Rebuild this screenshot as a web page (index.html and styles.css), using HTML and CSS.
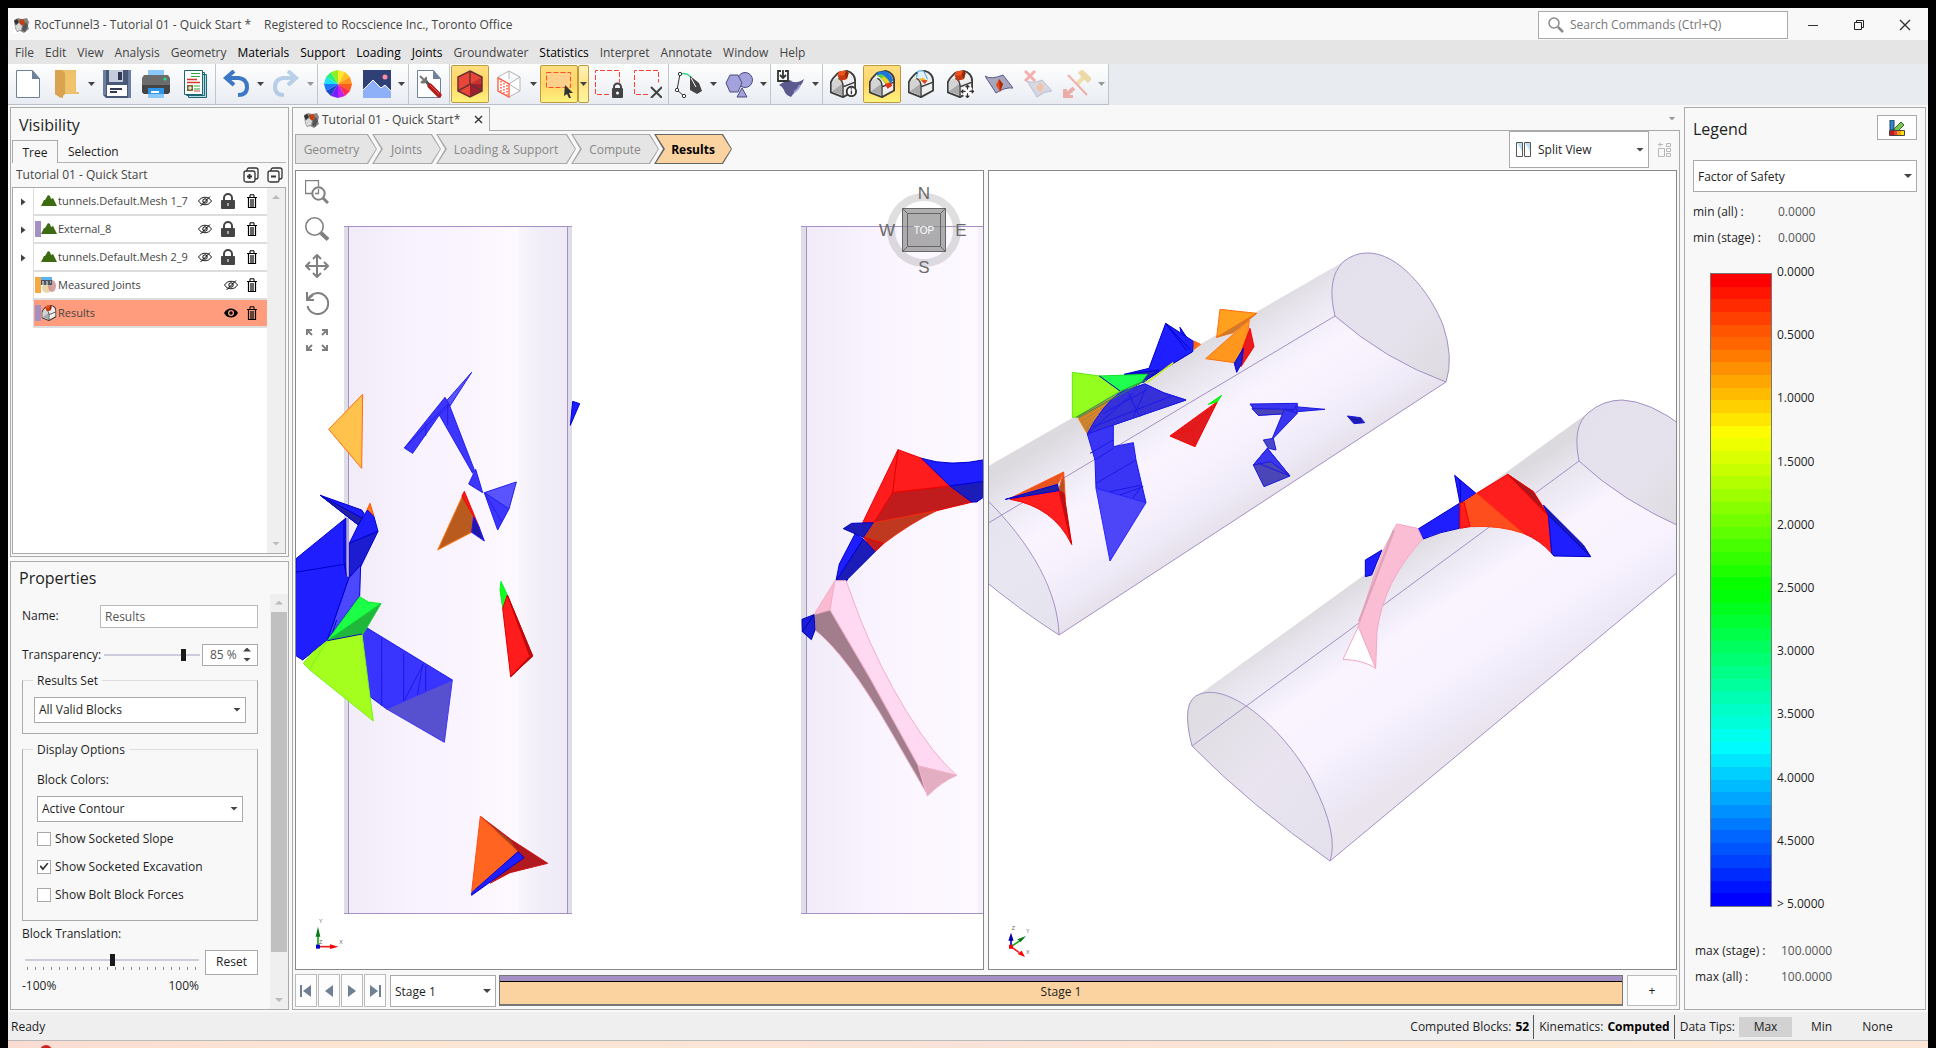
FILE: index.html
```html
<!DOCTYPE html>
<html lang="en">
<head>
<meta charset="utf-8">
<title>RocTunnel3 - Tutorial 01 - Quick Start</title>
<link rel="stylesheet" href="styles.css">
</head>
<body>
<svg class="defs" aria-hidden="true">
  <symbol id="rock" viewBox="0 0 16 16"><path d="M1 3 5 1l4 1 5-1 2 4-1 4 1 3-5 4-4-2-3 1-2-4z" fill="#888"/><path d="M2 9l4-3 3 3-1 4-4 1z" fill="#d8d8d8"/><path d="M6 3l4-1 2 3-1 4-4-2z" fill="#c2410f"/><path d="M10 9l3-4 2 4-3 6-3-2z" fill="#555"/><path d="M1 4l3-2 2 3-3 3z" fill="#333"/></symbol>
  <symbol id="arch" viewBox="0 0 28 30"><path d="M1 24V13C3 8 7 5 9 3l9-2c6 1 9 6 9 11v10l-13 7z" fill="#eee" stroke="#3c3c3c" stroke-width="2" stroke-linejoin="round"/><path d="M2 23V14c1-3 4-5 6-5 3 0 5 3 5 8v10z" fill="#d4d4d4"/><path d="M2 23l11-8v12z" fill="#aaa"/><path d="M14 29V18l13-5M9 9q5 2 5 9" fill="none" stroke="#3c3c3c" stroke-width="1.500"/></symbol>
  <symbol id="redrock" viewBox="0 0 14 12"><path d="M2 1l8-1 3 3-2 7-7 2-4-6z" fill="#f0521a"/><path d="M10 0l3 3-2 7-3-4z" fill="#8d2a0c"/><path d="M0 6l8 0 3 4-7 2z" fill="#c43a10"/></symbol>
  <symbol id="mountain" viewBox="0 0 16 12"><path d="M0 11 3 5l1 0 3-5 2 1 1 3 2-1 4 8z" fill="#3d6b12"/></symbol>
  <symbol id="eye-off" viewBox="0 0 14 12"><path d="M.5 6c3-5 10-5 13 0-3 5-10 5-13 0z" fill="#fff" stroke="#000" stroke-width=".9"/><circle cx="7" cy="6" r="2.200" fill="none" stroke="#000"/><path d="M2.500 11 12 1.500" stroke="#000"/></symbol>
  <symbol id="eye" viewBox="0 0 14 12"><path d="M0 6c3-6 11-6 14 0-3 6-11 6-14 0z"/><circle cx="7" cy="6" r="3" fill="#ff9c7e"/><circle cx="7" cy="6" r="1.700"/></symbol>
  <symbol id="lock" viewBox="0 0 14 16"><path d="M3 8V5a4 4 0 0 1 8 0v3" fill="none" stroke="#444" stroke-width="2"/><rect y="7" width="14" height="9" rx="1" fill="#444"/><path d="M7 10v3" stroke="#aaa" stroke-width="2"/></symbol>
  <symbol id="trash" viewBox="0 0 10 14"><path d="M0 3.500h10M3 3V.800h4V3" fill="none" stroke="#000"/><path d="M1.500 4v9.500h7V4M4 5v8M6 5v8" fill="none" stroke="#000" stroke-width="1.200"/></symbol>
</svg>

<div class="app">
  <header class="titlebar">
    <svg class="logo"><use href="#rock"/></svg>
    <h1>RocTunnel3 - Tutorial 01 - Quick Start *</h1>
    <span class="registered">Registered to Rocscience Inc., Toronto Office</span>
    <div class="search">
      <svg width="16" height="16" viewBox="0 0 16 16" fill="none" stroke="#8a8a8a"><circle cx="6" cy="6" r="5" stroke-width="1.500"/><path d="m10 10 5 5" stroke-width="2.500"/></svg>
      <input type="text" aria-label="Search commands" placeholder="Search Commands (Ctrl+Q)">
    </div>
    <div class="window-buttons">
      <button aria-label="Minimize"><svg width="12" height="12"><path d="M1 6.500h10" stroke="#333"/></svg></button>
      <button aria-label="Restore"><svg width="12" height="12" fill="none" stroke="#222"><path d="M1.500 3.500h7v7h-7zM3.500 3.500v-2h7v7h-2"/></svg></button>
      <button aria-label="Close"><svg width="12" height="12"><path d="m1 1 10 10M11 1 1 11" stroke="#333" stroke-width="1.400"/></svg></button>
    </div>
  </header>

  <nav class="menu">
    <button>File</button><button>Edit</button><button>View</button><button>Analysis</button><button>Geometry</button><button class="on">Materials</button><button class="on">Support</button><button class="on">Loading</button><button class="on">Joints</button><button>Groundwater</button><button class="on">Statistics</button><button>Interpret</button><button>Annotate</button><button>Window</button><button>Help</button>
  </nav>

  <div class="toolbar">
    <div class="group">
      <button class="tool" aria-label="New"><svg viewBox="0 0 28 28"><path d="M2.500.500h16l7 8v19h-23z" fill="#fff" stroke="#71809b"/><path d="M18 0v9h8z" fill="#71809b"/></svg></button>
      <button class="tool" aria-label="Open"><svg viewBox="0 0 28 28"><path d="M2 0h21v22h3v2H8v4l-6-4z" fill="#ecc068"/><path d="M2 0l8 6v22l-8-4z" fill="#cf9744"/><path d="M2 0h7l3 3v21l-4 4-6-4z" fill="#d9a350"/><path d="M13 3h9v20h-9z" fill="#f0c46c"/></svg></button><button class="drop" aria-label="Open recent"></button>
      <button class="tool" aria-label="Save"><svg viewBox="0 0 28 28"><path d="M0 0h28v28H3l-3-3z" fill="#4a5878"/><path d="M25 0h3v28h-3zM0 0h3v25H0z" fill="#6e80a2"/><path d="M6 0h14v12H6z" fill="#c5ccdc"/><path d="M15 2h4v8h-4z" fill="#313a52"/><path d="M4 15h20v11H4z" fill="#fff"/><path d="M7 19h12M7 22h7" stroke="#313a52" stroke-width="2"/></svg></button>
      <button class="tool" aria-label="Print"><svg viewBox="0 0 28 28"><path d="M6 0h16v8H6z" fill="#8cc8fa"/><path d="M2 5h24l2 3v14l-2 2H2l-2-2V8z" fill="#6c6c6c"/><path d="M0 15h28v7l-2 2H2l-2-2z" fill="#454545"/><circle cx="23" cy="9" r="1.600" fill="#1ee07c"/><path d="M6 18h16v10H6z" fill="#2e96e8"/><path d="M6 24h16v4H6z" fill="#8cc8fa"/><path d="M9 22h8" stroke="#fff" stroke-width="2"/></svg></button>
      <button class="tool" aria-label="Report"><svg viewBox="0 0 28 28"><path d="M8.500 4.500h17v23h-18v-2M6.500 2.500h17v23h-18v-2" fill="#b6dce4" stroke="#1e6674"/><path d="M3.500.500h18v24h-18z" fill="#fff" stroke="#1e6674"/><path d="M10 3.500h9M10 6.500h9M13 16h6M13 19h6" stroke="#2eaa40"/><path d="M6 9.500h10M6 12.500h13" stroke="#d8342a" stroke-width="1.300"/><path d="M6 15h6v6H6z" fill="#7a6a28"/><path d="M9 16v4M7 18h4" stroke="#fff"/><path d="M13 21h6" stroke="#c44"/></svg></button>
    </div>
    <div class="group">
      <button class="tool" aria-label="Undo"><svg viewBox="0 0 28 28"><path d="M12 1 4 8l8 7M5 8h12q8 1 8 9t-9 8" fill="none" stroke="#3d78c4" stroke-width="4"/></svg></button><button class="drop" aria-label="Undo list"></button>
      <button class="tool" aria-label="Redo"><svg viewBox="0 0 28 28" opacity=".5"><path d="m16 1 8 7-8 7M23 8H11q-8 1-8 9t9 8" fill="none" stroke="#7ba9d8" stroke-width="4"/></svg></button><button class="drop dim" aria-label="Redo list"></button>
    </div>
    <div class="group">
      <button class="tool" aria-label="Colors"><svg viewBox="0 0 28 28"><g transform="translate(14 14)"><path d="M0 0V-14L7-12z" fill="#ffe72c"/><path d="M0 0 7-12 12-7z" fill="#ffc21e"/><path d="M0 0 12-7 14 0z" fill="#ff941e"/><path d="M0 0H14L12 7z" fill="#ff5c1c"/><path d="M0 0 12 7 7 12z" fill="#ff2c50"/><path d="M0 0 7 12 0 14z" fill="#c31ef0"/><path d="M0 0V14L-7 12z" fill="#7a1eff"/><path d="M0 0-7 12-12 7z" fill="#1e46c8"/><path d="M0 0-12 7-14 0z" fill="#1e78ff"/><path d="M0 0H-14L-12-7z" fill="#1ee0f0"/><path d="M0 0-12-7-7-12z" fill="#28f07c"/><path d="M0 0-7-12 0-14z" fill="#8cf01e"/></g></svg></button>
      <button class="tool" aria-label="Image"><svg viewBox="0 0 28 28"><path d="M0 0h28v28H0z" fill="#2e4076"/><path d="M0 20 10 10l8 8 4-3 6 6v7H0z" fill="#8eb0f8"/><path d="m0 20 10-10 8 8 4-3 6 6" fill="none" stroke="#fff"/><circle cx="22" cy="7" r="2.500" fill="#ff8ca0"/></svg></button><button class="drop" aria-label="Image options"></button>
    </div>
    <div class="group">
      <button class="tool" aria-label="Project settings"><svg viewBox="0 0 28 28"><path d="M2.500.500h16l7 8v19h-23z" fill="#fff" stroke="#71809b"/><path d="M18 0v9h8z" fill="#71809b"/><path d="m9 9 7 8" stroke="#555" stroke-width="3"/><path d="M5 6l4 4-3 3M6 12q6 2 5-5" fill="none" stroke="#777" stroke-width="2"/><path d="m15 16 9 9" stroke="#b01c1c" stroke-width="5" stroke-linecap="round"/><path d="m15 15 9 9" stroke="#f05050"/></svg></button>
    </div>
    <div class="group">
      <button class="tool active" aria-label="Solid"><svg viewBox="0 0 28 28"><path d="M14 1l12 6v14l-12 6-12-6V7z" fill="#e84638"/><path d="M14 14h12v7l-12 6z" fill="#a02030"/><path d="M14 14 26 7v7z" fill="#c63430"/><path d="M14 1l12 6v14l-12 6-12-6V7zM14 1v13M2 21l12-7 12 7" fill="none" stroke="#6a3030" stroke-width="1.500"/></svg></button>
      <button class="tool" aria-label="Faces"><svg viewBox="0 0 28 28"><path d="M14 1l11 6v14l-11 6M14 1 3 7l11 7 11-7M14 14l11 7M14 1v8" fill="#fff" stroke="#b4b4b4"/><path d="m3 8 11 6v13L3 21z" fill="#fff" stroke="#ff5a3c" stroke-width="1.300"/><path d="M6 11v11M9 13v11M12 15v10" stroke="#ff5a3c" stroke-width="1.500" stroke-dasharray="1.500 1.500"/></svg></button><button class="drop" aria-label="Face options"></button>
      <button class="tool active" aria-label="Select"><svg viewBox="0 0 28 28"><path d="M1.500 2.500h24v15h-24z" fill="#ffd08c" stroke="#ff5020" stroke-dasharray="5 2"/><path d="M20 15l8 8-4 0 2 5-2 0-2-4-3 2z" fill="#333"/></svg></button><button class="drop active" aria-label="Select options"></button>
      <button class="tool" aria-label="Lock selection"><svg viewBox="0 0 28 28"><path d="M14 24.500H.500V.500h24v12" fill="none" stroke="#ff4030" stroke-dasharray="5 2"/><path d="M19 18v-1a3.500 3.500 0 0 1 7 0v1" fill="none" stroke="#444" stroke-width="2"/><rect x="17" y="18" width="11" height="10" rx="1" fill="#444"/><circle cx="22.500" cy="23" r="1.500" fill="#fff"/></svg></button>
      <button class="tool" aria-label="Clear selection"><svg viewBox="0 0 28 28"><path d="M14 24.500H.500V.500h24v12" fill="none" stroke="#ff4030" stroke-dasharray="5 2"/><path d="m17 17 11 11M28 17 17 28" stroke="#444" stroke-width="2"/></svg></button>
    </div>
    <div class="group">
      <button class="tool" aria-label="Pen"><svg viewBox="0 0 28 28" fill="none"><path d="M5 4 2 20l7 6" stroke="#333"/><path d="M5 4q6-2 11 3" stroke="#2ed880" stroke-width="1.500"/><g fill="#fff" stroke="#333"><circle cx="5" cy="4" r="1.700"/><circle cx="2" cy="20" r="1.700"/><circle cx="9" cy="26" r="1.700"/></g><path d="m15 6 9 7 3 8-5 3-7-4z" fill="#444"/><path d="m16 8 5 9" stroke="#fff"/></svg></button><button class="drop" aria-label="Pen options"></button>
      <button class="tool" aria-label="Shapes"><svg viewBox="0 0 28 28" fill="#a4a2dc" stroke="#4c4c80"><circle cx="20" cy="10" r="7.500"/><path d="M5 5h8l4 8-4 9H5l-4-9z"/><path d="m17 18 5 9H12z"/></svg></button><button class="drop" aria-label="Shape options"></button>
    </div>
    <div class="group">
      <button class="tool" aria-label="Import surface"><svg viewBox="0 0 28 28"><path d="M2 15q5-4 11-5 5 5 14-1-1 4-4 7t-9 11q-6-2-7-7-2-4-5-5z" fill="#5b5a8e"/><path d="M17 22q4-2 6-7" stroke="#9c9bd0" stroke-width="2" fill="none"/><path d="M4 1H1v10h10V1H8M6 0v7M3 5l3 3 3-3" fill="none" stroke="#333" stroke-width="1.800"/></svg></button><button class="drop" aria-label="Import options"></button>
    </div>
    <div class="group">
      <button class="tool" aria-label="Block info"><svg viewBox="0 0 28 30"><use href="#arch" width="28" height="30"/><use href="#redrock" x="8" width="13" height="12"/><circle cx="23" cy="23" r="5" fill="#fff" stroke="#333" stroke-width="2"/><path d="M23 22v4M23 19.500v1.500" stroke="#333" stroke-width="1.500"/></svg></button>
      <button class="tool active" aria-label="Block contours"><svg viewBox="0 0 28 30"><use href="#arch" width="28" height="30"/><path d="M10 2l8-1q6 3 8 10l-6 7q-4-9-12-13z" fill="#1e74e0"/><path d="M9 6q3-2 6-1 6 4 8 10l-3 4q-4-8-11-13z" fill="#5ed040"/><path d="M13 9q5 3 8 10l3-3q-3-6-8-9z" fill="#f8d01e"/><path d="m17 15 6-2 2 4-5 3z" fill="#e0341e"/></svg></button>
      <button class="tool" aria-label="Block outlines"><svg viewBox="0 0 28 30"><use href="#arch" width="28" height="30"/><path d="m9 8 2-7h6l4 9" fill="#e0f0fa" stroke="#3c9ac0"/><path d="m12 9 9 2-3 4z" fill="#d8401e"/><path d="m11 11 5-3 3 3z" fill="#f0b81e"/></svg></button>
      <button class="tool" aria-label="Move block"><svg viewBox="0 0 28 30"><use href="#arch" width="28" height="30"/><use href="#redrock" x="8" width="13" height="12"/><circle cx="22" cy="23" r="6" fill="#fff"/><path d="M22 16v5M22 25v5M15 23h5M24 23h5M20 18.500l2-2 2 2M20 27.500l2 2 2-2M17.500 21l-2 2 2 2M26.500 21l2 2-2 2" stroke="#333" stroke-width="1.300" fill="none"/></svg></button>
      <button class="tool" aria-label="Surface block"><svg viewBox="0 0 28 28"><path d="M0 6q6 4 18-1l10 13q-8-1-17 5z" fill="#a5a8bc" stroke="#5b5a8e"/><path d="m14 9 4 5-3 8-4-7z" fill="#e8481c"/><path d="m14 9 4 5-3 8z" fill="#a82c0c"/></svg></button>
      <button class="tool faded" aria-label="Remove surface block"><svg viewBox="0 0 28 28"><path d="M3 11q6 3 15-1l10 11q-8 0-15 6z" fill="#a5a8bc" stroke="#5b5a8e"/><path d="m16 12 4 4-3 7-5-5z" fill="#f06a1c"/><path d="m1 1 10 10M11 1 1 11" stroke="#e82c1c" stroke-width="3"/></svg></button>
      <button class="tool faded" aria-label="Bolt forces"><svg viewBox="0 0 28 28" fill="none"><path d="m14 14 9-9" stroke="#e0b01c" stroke-width="4"/><path d="m17 1 10 10" stroke="#d8a010" stroke-width="6"/><path d="M11 18 2 26M2 19v8h8" stroke="#e83020" stroke-width="4"/><path d="m5 5 19 20" stroke="#e83020" stroke-width="2"/></svg></button><button class="drop dim" aria-label="Bolt options"></button>
    </div>
  </div>

  <main class="workspace">
    <aside class="sidebar">
      <section class="panel visibility">
        <h2>Visibility</h2>
        <div class="tabs"><button class="tab current">Tree</button><button class="tab">Selection</button></div>
        <div class="tree-head"><span>Tutorial 01 - Quick Start</span>
          <button aria-label="Expand all"><svg width="16" height="16" fill="#f8f8f8" stroke="#333" stroke-width="1.300"><rect x="4" y="1" width="11" height="11" rx="2"/><rect x="1" y="4" width="11" height="11" rx="2"/><path d="M4 9.500h5M6.500 7v5" stroke-width="2"/></svg></button>
          <button aria-label="Collapse all"><svg width="16" height="16" fill="#f8f8f8" stroke="#333" stroke-width="1.300"><rect x="4" y="1" width="11" height="11" rx="2"/><rect x="1" y="4" width="11" height="11" rx="2"/><path d="M4 9.500h5" stroke-width="2"/></svg></button>
        </div>
        <div class="tree-box">
          <ul class="tree">
            <li><button class="twist" aria-label="Expand"></button><div class="node"><i class="chip"></i><svg class="kind"><use href="#mountain"/></svg><span>tunnels.Default.Mesh 1_7</span><button class="act" aria-label="Show"><svg class="i-eye"><use href="#eye-off"/></svg></button><button class="act locked" aria-label="Locked"><svg class="i-lock"><use href="#lock"/></svg></button><button class="act" aria-label="Delete"><svg class="i-trash"><use href="#trash"/></svg></button></div></li>
            <li><button class="twist" aria-label="Expand"></button><div class="node"><i class="chip violet"></i><svg class="kind"><use href="#mountain"/></svg><span>External_8</span><button class="act" aria-label="Show"><svg class="i-eye"><use href="#eye-off"/></svg></button><button class="act locked" aria-label="Locked"><svg class="i-lock"><use href="#lock"/></svg></button><button class="act" aria-label="Delete"><svg class="i-trash"><use href="#trash"/></svg></button></div></li>
            <li><button class="twist" aria-label="Expand"></button><div class="node"><i class="chip"></i><svg class="kind"><use href="#mountain"/></svg><span>tunnels.Default.Mesh 2_9</span><button class="act" aria-label="Show"><svg class="i-eye"><use href="#eye-off"/></svg></button><button class="act locked" aria-label="Locked"><svg class="i-lock"><use href="#lock"/></svg></button><button class="act" aria-label="Delete"><svg class="i-trash"><use href="#trash"/></svg></button></div></li>
            <li><div class="node"><i class="chip amber"></i><svg class="kind tall" viewBox="0 0 16 16"><circle cx="6" cy="11" r="5" fill="#e8d8a8"/><ellipse cx="11" cy="9" rx="4" ry="6" fill="#c88c90" opacity=".8"/><path d="M0 0h11v8H0z" fill="#4a5560"/><path d="M0 0h11v3H0z" fill="#58b4f0"/><path d="M1 5h2M5 5h2M9 5h1M1 7h2M5 7h2" stroke="#fff"/></svg><span>Measured Joints</span><button class="act" aria-label="Show"><svg class="i-eye"><use href="#eye-off"/></svg></button><button class="act" aria-label="Delete"><svg class="i-trash"><use href="#trash"/></svg></button></div></li>
            <li><div class="node selected"><i class="chip violet"></i><svg class="kind tall" viewBox="0 0 28 30"><use href="#arch" width="28" height="30"/><use href="#redrock" x="7" width="13" height="12"/></svg><span>Results</span><button class="act" aria-label="Hide"><svg class="i-eye"><use href="#eye"/></svg></button><button class="act" aria-label="Delete"><svg class="i-trash"><use href="#trash"/></svg></button></div></li>
          </ul>
          <div class="scroll"><i class="up"></i><i class="down"></i></div>
        </div>
      </section>

      <section class="panel properties">
        <h2>Properties</h2>
        <div class="prop-body">
          <form class="form">
            <div class="row name"><label for="name">Name:</label><input id="name" type="text" value="Results"></div>
            <div class="row transparency"><label for="transp">Transparency:</label><input id="transp" type="range" min="0" max="100" value="85"><div class="spin"><input type="text" aria-label="Transparency percent" value="85 %"><div class="spin-btns"><button type="button" aria-label="Increase" class="inc"></button><button type="button" aria-label="Decrease" class="dec"></button></div></div></div>
            <fieldset class="set"><legend>Results Set</legend>
              <div class="select"><select aria-label="Results Set"><option>All Valid Blocks</option></select></div>
            </fieldset>
            <fieldset class="options"><legend>Display Options</legend>
              <label for="colors">Block Colors:</label>
              <div class="select"><select id="colors"><option>Active Contour</option></select></div>
              <label class="check"><input type="checkbox">Show Socketed Slope</label>
              <label class="check"><input type="checkbox" checked>Show Socketed Excavation</label>
              <label class="check"><input type="checkbox">Show Bolt Block Forces</label>
            </fieldset>
            <label class="bt" for="bt">Block Translation:</label>
            <div class="row translation">
              <div class="scale"><input id="bt" type="range" min="-100" max="100" value="0"><div class="ticks"></div><div class="ends"><span>-100%</span><span>100%</span></div></div>
              <button type="button" class="reset">Reset</button>
            </div>
          </form>
          <div class="scroll wide"><i class="up"></i><div class="thumb"></div><i class="down"></i></div>
        </div>
      </section>
    </aside>

    <section class="document">
      <div class="doc-tabs"><div class="doc-tab"><svg class="logo"><use href="#rock"/></svg><span>Tutorial 01 - Quick Start*</span><button aria-label="Close tab"><svg width="9" height="9"><path d="m1 1 7 7M8 1 1 8" stroke="#333" stroke-width="1.400"/></svg></button></div><div class="doc-rest"><button aria-label="Tab list" class="caret"></button></div></div>
      <div class="doc-body">
        <div class="workflow">
          <nav class="steps"><button class="w1"><span>Geometry</span></button><button class="w2"><span>Joints</span></button><button class="w3"><span>Loading &amp; Support</span></button><button class="w4"><span>Compute</span></button><button class="w5 now"><span>Results</span></button></nav>
          <div class="select split"><svg width="15" height="15" viewBox="0 0 15 15"><path d="M.500.500h6v14h-6zM8.500.500h6v14h-6z" fill="#fff" stroke="#555"/><path d="M1 1h5v8zM9 1h5v8z" fill="#bfe0f4"/></svg><select aria-label="View layout"><option>Split View</option></select></div>
          <button class="sync" aria-label="Layout"><svg width="15" height="16" fill="none" stroke="#b8b8b8"><path d="M1.500 6.500h6v8h-6zM1 2.500h5M3 .500v4M9.500 1.500h4v3h-4zM9.500 6.500h4v3h-4zM9.500 11.500h4v3h-4z"/></svg></button>
        </div>
        <div class="views">
          <div class="view">
          <div class="view-tools">
            <button aria-label="Zoom window"><svg viewBox="0 0 24 24"><path d="M7 13.500H.500V.500h13v6" stroke-width="1.300"/><circle cx="13.500" cy="13.500" r="6.200" fill="#fff" stroke-width="2"/><path d="M13.500 9v4.500H10" stroke-width="1.300"/><path d="m18 18 5 5" stroke-width="3"/></svg></button>
            <button aria-label="Zoom"><svg viewBox="0 0 24 24"><circle cx="9.500" cy="9.500" r="8.700" stroke-width="1.600"/><path d="m16 16 7 6.500" stroke-width="4"/></svg></button>
            <button aria-label="Pan"><svg viewBox="0 0 24 24" stroke-width="2"><path d="M12 1v22M1 12h22M8 5l4-4 4 4M8 19l4 4 4-4M5 8l-4 4 4 4M19 8l4 4-4 4"/></svg></button>
            <button aria-label="Rotate"><svg viewBox="0 0 24 24" stroke-width="2"><path d="M3.500 7.500A10.500 10.500 0 1 1 2.500 15M2 1v8h7M2 9l6-5"/></svg></button>
            <button aria-label="Zoom all"><svg viewBox="0 0 24 24" stroke-width="2"><path d="M2 7V2h5M2 2l5 5M17 2h5v5M22 2l-5 5M2 17v5h5M2 22l5-5M22 17v5h-5M22 22l-5-5"/></svg></button>
          </div>
          <svg class="scene" viewBox="296 171 687 798" preserveAspectRatio="xMidYMid slice" role="img" aria-label="Top view of tunnels and blocks">
            <defs>
              <linearGradient id="t1"><stop offset="0" stop-color="#f1ecf8"/><stop offset=".13" stop-color="#f3eef9"/><stop offset=".3" stop-color="#f9f3ff"/><stop offset=".55" stop-color="#faf4ff"/><stop offset=".77" stop-color="#fefaff"/><stop offset=".78" stop-color="#f8f5fc"/><stop offset=".87" stop-color="#f2eef8"/><stop offset="1" stop-color="#efeaf6"/></linearGradient>
              <linearGradient id="t2"><stop offset="0" stop-color="#f1ecf8"/><stop offset=".16" stop-color="#f3eef9"/><stop offset=".35" stop-color="#f9f3ff"/><stop offset=".96" stop-color="#fdf9ff"/><stop offset=".97" stop-color="#f5f0fb"/></linearGradient>
            </defs>
            <path d="M344 226h228v687H344z" fill="#dfdde8"/><path d="M348 226h220v687H348z" fill="url(#t1)"/>
            <path d="M801 226h190v687H801z" fill="#dfdde8"/><path d="M806 226h178v687H806z" fill="url(#t2)"/>
            <path d="M344 226.500h228M344 913.500h228M348.500 226v687M567.500 226v687M801 226.500h190M801 913.500h190M806.500 226v687" stroke="#a590c4" fill="none"/>
            <g transform="translate(290 160) scale(.33333)" stroke-width="3" stroke-linejoin="bevel">
              <path d="M218 703 116 808 215 925z" fill="#ffc34d" stroke="#ff6a10"/>
              <g fill="#3c36ff" stroke="#241ee8"><path d="M545 637 470 722 480 738z" fill="#5a54ff"/><path d="M465 712 343 864 368 880 448 765 480 738z"/><path d="M478 735 448 765 548 940 553 930z"/><path d="M557 928 536 972 578 998z"/><path d="M583 998 679 966 657 1047z" fill="#5a54ff"/><path d="M583 998 657 1047 623 1110z"/><path d="M583 998 635 1085M407 790V828M473 730V795M343 864 470 735" fill="none"/></g>
              <path d="M848 724 869 731 841 796z" fill="#1c1cff" stroke="#00d"/>
              <path d="M518 1006 443 1170 545 1117 551 1070z" fill="#b95a1e" stroke="#ff7a10"/><path d="M523 994 516 1008 551 1070 545 1117 568 1103z" fill="#e8201c" stroke="red"/><path d="M551 1070 545 1117 583 1143 568 1103z" fill="#2018a8" stroke="#1818ff"/>
              <path d="M240 1030 231 1050 252 1068z" fill="#ff7a1e" stroke="#f50"/>
              <g fill="#1e1eff" stroke="#0000c8"><path d="M91 1006 215 1050 222 1060 205 1095z"/><path d="M91 1006 218 1075 205 1095z" fill="#2020a8"/><path d="M205 1095 232 1050 252 1070 264 1114 178 1150z"/><path d="M178 1150 264 1114 212 1220 178 1250z" fill="#1c1cd0"/><path d="M176 1255 212 1215 209 1308 112 1440z" fill="#4c48ff"/><path d="M168 1074 18 1196 10 1482 38 1500 112 1440 176 1255 168 1240zM10 1238 168 1212M162 1080V1210L170 1250M140 1380 125 1425"/></g>
              <path d="M173 1074V1250" stroke="#b8acd8" stroke-width="5"/>
            </g>
            <g transform="translate(290 540) scale(.33333)" stroke-width="3" stroke-linejoin="bevel">
              <g fill="#3a34ff" stroke="#1c18e8"><path d="M228 262 487 420 290 507 240 470 216 285zM275 292V497M341 338V485M341 485 400 372M382 468 398 372M407 378V455"/><path d="M487 420 463 607 290 507z" fill="#5750cf" stroke="#3c34ff"/></g>
              <path d="M209 170 235 186 273 191 112 302z" fill="#1cff46" stroke="#0ee82c"/><path d="M273 191 219 282 112 302z" fill="#20b83a" stroke="#1c3"/>
              <path d="M112 302 216 282 240 470 250 543 60 390 40 370 65 340zM112 302 60 385" fill="#a4ff1e" stroke="#78f01c"/><path d="M112 302 216 282" stroke="#0000c0"/>
              <path d="M633 124 652 165 638 205 630 150z" fill="#10ff20" stroke="#1e2"/><path d="M652 165 728 348 662 410 638 205z" fill="#ff1c1c" stroke="#d00"/><path d="M652 165 728 348 718 345zM728 348 662 410 718 350z" fill="#a81820" stroke="#c00"/>
              <path d="M571 829 665 900 773 970 660 998 600 1030 690 945 684 935z" fill="#b01a1e" stroke="#d01010"/><path d="M571 829 660 900 684 935z" fill="#a04420"/><path d="M571 829 684 935 545 1055z" fill="#ff6420" stroke="#ff4c10"/><path d="M684 935 702 953 545 1066V1058z" fill="#1e1eff" stroke="#0000c8"/>
              <path d="M84 1220V1170" stroke="#1a1" stroke-width="5"/><path d="M77 1190 84 1160 91 1190z" fill="#0a7a1c"/><path d="M84 1220H130" stroke="#e22" stroke-width="5"/><path d="M120 1213 145 1220 120 1227z" fill="red"/><path d="M78 1214h12v12H78z" fill="#0000c0"/>
              <g class="axis"><text x="87" y="1150">Y</text><text x="148" y="1211">X</text><text x="87" y="1211">Z</text></g>
            </g>
            <g transform="translate(780 160) scale(.33333)" stroke-width="3" stroke-linejoin="bevel">
              <path d="M354 869 425 895 510 978 338 998 282 1088H248z" fill="#ff1c1c" stroke="#e00"/><path d="M354 869 338 998" stroke="#d00"/>
              <path d="M338 998 510 978 578 1026 470 1052 282 1088z" fill="#c01c1e" stroke="#e00"/>
              <path d="M425 895Q510 922 620 898V964L510 978z" fill="#1e1eff" stroke="#0000c8"/><path d="M510 978 620 963V1005L590 1026H575z" fill="#1c1cb8" stroke="#00d"/>
              <path d="M282 1088 470 1052Q390 1090 312 1150L250 1132z" fill="#bf3820" stroke="#f02c10"/><path d="M250 1132 312 1150 285 1175z" fill="#c01c1e" stroke="#e00"/>
              <g stroke="#0000c8"><path d="M190 1106 215 1090 280 1088 250 1132z" fill="#1c1cb8"/><path d="M225 1122 250 1137 168 1262 178 1212z" fill="#1e1eff"/><path d="M250 1137 285 1175 205 1255 198 1265H168z" fill="#1c1cb8"/></g>
            </g>
            <g transform="translate(780 540) scale(.33333)" stroke-width="3" stroke="#f0b0c8" stroke-linejoin="bevel">
              <path d="M165 122 150 210 102 224z" fill="#fbb9d2"/><path d="M165 122H198L240 235Q300 385 380 515T530 706L415 678 270 415 150 210z" fill="#ffd8f2"/>
              <path d="M150 210 102 224 105 270Q200 345 330 570L437 755 415 678 270 415z" fill="#a27e8c"/><path d="M415 678 530 706Q485 725 442 768z" fill="#e3aec2"/>
              <path d="M66 238 102 224 105 270 94 299 67 275z" fill="#1c1cd8" stroke="#0000b0"/><path d="M102 224 67 275" stroke="#0000b0"/>
            </g>
            <circle cx="924" cy="230" r="33" fill="none" stroke="#888" stroke-opacity=".27" stroke-width="8"/>
            <path d="M902.500 208.500h43v43h-43z" fill="#8c8c8c" fill-opacity=".7" stroke="#666"/><path d="M907.500 213.500h33v33h-33zM902.500 208.500l5 5M945.500 208.500l-5 5M902.500 251.500l5-5M945.500 251.500l-5-5" fill="none" stroke="#666"/>
            <g class="compass"><text x="924" y="199">N</text><text x="887" y="236">W</text><text x="961" y="236">E</text><text x="924" y="273">S</text></g><text class="top" x="924" y="234">TOP</text>
          </svg>
          </div>
          <div class="view">
          <svg class="scene" viewBox="989 171 687 798" preserveAspectRatio="xMidYMid slice" role="img" aria-label="Perspective view of tunnels and blocks">
            <defs>
              <linearGradient id="ta" gradientUnits="userSpaceOnUse" x1="1160" y1="368" x2="1252" y2="509"><stop offset="0" stop-color="#dcdade"/><stop offset=".15" stop-color="#e8e5ee"/><stop offset=".33" stop-color="#f4f0fb"/><stop offset=".45" stop-color="#faf4ff"/><stop offset=".62" stop-color="#f8f2fe"/><stop offset=".85" stop-color="#eeeaf7"/><stop offset="1" stop-color="#e6e1ea"/></linearGradient>
              <linearGradient id="tb" gradientUnits="userSpaceOnUse" x1="1395" y1="553" x2="1503" y2="717"><stop offset="0" stop-color="#dcdade"/><stop offset=".12" stop-color="#e8e5ee"/><stop offset=".28" stop-color="#f2eefa"/><stop offset=".36" stop-color="#faf4ff"/><stop offset=".65" stop-color="#f9f3ff"/><stop offset=".85" stop-color="#eeeaf8"/><stop offset="1" stop-color="#eae4ee"/></linearGradient>
              <linearGradient id="te" x2="1" y2="1"><stop offset="0" stop-color="#dddce0"/><stop offset=".5" stop-color="#e9e4ef"/><stop offset="1" stop-color="#e4e1ec"/></linearGradient>
              <linearGradient id="tf" x2="1" y2="1"><stop offset="0" stop-color="#e4e0ec"/><stop offset=".6" stop-color="#e6e2ed"/><stop offset="1" stop-color="#dcdade"/></linearGradient>
            </defs>
            <path d="M980 471 1343 262Q1354 253 1367 253C1398 252 1430 292 1443 325Q1454 358 1446 382L1059 635 980 577z" fill="url(#ta)"/>
            <path d="M1335 316Q1326 279 1343 262 1354 253 1367 253C1398 252 1430 292 1443 325Q1454 358 1446 382 1385 360 1335 316z" fill="url(#tf)"/>
            <path d="M980 493C1035 545 1056 595 1059 635Q1020 610 980 577z" fill="#e4e2ec" opacity=".8"/>
            <path d="M1200 694 1588 413Q1603 400 1622 400 1650 401 1685 428V566L1330 861 1192 746Q1180 710 1200 694z" fill="url(#tb)"/>
            <path d="M1579 461Q1572 426 1588 413 1603 400 1622 400 1650 401 1685 428V529Q1620 500 1579 461z" fill="url(#tf)"/>
            <path d="M1192 746Q1180 700 1200 694C1235 682 1292 740 1313 783Q1339 835 1330 861 1250 805 1192 746z" fill="url(#te)"/>
            <g fill="none" stroke="#a590c4">
              <path d="M1335 316Q1326 279 1343 262 1354 253 1367 253C1398 252 1430 292 1443 325Q1454 358 1446 382 1385 360 1335 316L980 528M1446 382 1059 635Q1020 610 980 577M980 493C1035 545 1058 595 1059 635"/>
              <path d="M1579 461Q1572 426 1588 413 1603 400 1622 400 1650 401 1685 428M1685 529Q1620 500 1579 461L1192 746Q1180 700 1200 694C1235 682 1292 740 1313 783Q1339 835 1330 861L1685 566M1192 746Q1250 805 1330 861"/>
            </g>
            <g transform="translate(780 160) scale(.33333)" stroke-width="3" stroke-linejoin="bevel">
              <g fill="#1e1eff" stroke="#0000c8"><path d="M1200 502 1222 535 1205 530z"/><path d="M1157 490 1242 545 1238 575 1090 665 1033 643 1107 625zM1157 490 1220 572M1165 500 1232 570"/><path d="M1033 643 1137 630 1090 668z" fill="#2222b8"/></g>
              <path d="M1100 668 1180 608" stroke="#c8f01c" stroke-width="5"/>
              <path d="M1242 543 1262 553 1242 568z" fill="#ff6a1c" stroke="#f60"/>
              <path d="M893 772 1015 703 955 765 922 822z" fill="#c08038" stroke="#f08c10"/><path d="M900 780 1000 720M908 790 985 735M914 800 965 755" stroke="#f08c10"/>
              <path d="M1095 672 1150 698 1218 720 1000 795V860L1060 848 1068 900 1098 1028 948 985 945 900 922 822Q970 730 1025 695z" fill="#3a34f4" stroke="#1c18e8"/>
              <path d="M1095 672 1150 698 1218 720 1000 795 922 822Q970 730 1025 695z" fill="#3630d8" stroke="#1c18e8"/>
              <path d="M948 985 1098 1028 990 1203z" fill="#4d46f8" stroke="#2c24ff"/>
              <path d="M922 822 1060 700M940 800 1175 708M930 880 1000 840M945 900 1000 865M948 970 1068 900M990 995 1085 975M1020 1005 1090 980M1060 1012 1085 978M970 760 1100 690M1045 700 1080 770M1100 680 1060 770" stroke="#1c18e8" fill="none"/>
              <path d="M877 637 958 648 1020 693 888 772H877z" fill="#94ff1e" stroke="#5ee81c"/><path d="M958 648 1102 643 1085 665 1022 693z" fill="#1eff50" stroke="#0ee02c"/><path d="M888 772 1022 695 1100 660M895 772 1085 668" stroke="#2c8c3c" fill="none"/><path d="M958 648 1020 693" stroke="#0000c0"/>
              <path d="M1320 448 1430 460 1310 532z" fill="#ffa01e" stroke="#ff7010"/><path d="M1310 532 1430 460 1360 518z" fill="#c87c30" stroke="#f07010"/><path d="M1408 480 1395 590 1363 608 1277 596z" fill="#ff961e" stroke="#ff7010"/><path d="M1410 505 1422 560 1383 620 1375 600z" fill="#e81c1e" stroke="red"/><path d="M1390 565 1363 610 1370 637 1385 610z" fill="#2020d0" stroke="#00d"/>
              <path d="M1312 725 1245 860 1170 828z" fill="#e01c1e" stroke="red"/><path d="M1170 828 1238 808 1245 860M1238 808 1312 725" stroke="#f01010" fill="none"/><path d="M1325 706 1312 725 1285 733z" fill="#1eff1e" stroke="#0e0"/>
              <path d="M690 1018 836 990 875 1153Q820 1040 690 1018z" fill="#ff1e1e" stroke="#e00"/><path d="M851 936 690 1015 833 973z" fill="#e8541e" stroke="#ff5010"/><path d="M851 936 856 1020 836 990z" fill="#b85020" stroke="#ff5010"/><path d="M852 1000 875 1153 838 992z" fill="#a8181c" stroke="#d00"/><path d="M676 1018 833 973 836 992z" fill="#2020a0" stroke="#0000e0"/>
            </g>
            <g transform="translate(1240 220) scale(.33333)" stroke-width="3" stroke-linejoin="bevel">
              <g fill="#3a36f0" stroke="#1c18e0"><path d="M30 552 172 550 172 578 55 586z"/><path d="M36 566 165 568 130 582 55 586z" fill="#4a46b8"/><path d="M165 560 255 568 172 575z"/><path d="M133 568 172 580 95 660z"/><path d="M70 660 100 655 108 690 85 685z" fill="#4a46c8"/><path d="M82 685 150 768 72 800 40 735z" fill="#4a46b8"/><path d="M82 685 150 768 92 725 40 735zM55 730 150 768"/><path d="M322 588 362 593 374 608 342 611z" fill="#1c1cb0"/></g>
              <path d="M644 766 708 820 660 850zM660 780 662 850" fill="#1e1eff" stroke="#0000c8"/><path d="M533 928 658 850V925Q600 935 550 957z" fill="#1e1eff" stroke="#0000c8"/>
              <path d="M803 763 880 815 925 885 935 1000Q900 960 850 940L710 820z" fill="#ff1e1e" stroke="#e00"/><path d="M803 763 880 815 922 885z" fill="#a8181c" stroke="#e00"/>
              <path d="M710 820 850 940Q780 915 690 920L672 846z" fill="#ff4e1e" stroke="#ff3c10"/><path d="M660 850 672 846 690 920 660 925z" fill="#ff1e1e" stroke="#e00"/>
              <path d="M925 885 935 1000 942 1008 1052 1010z" fill="#1e1eff" stroke="#0000c8"/><path d="M910 855 925 885 1052 1010 1030 975z" fill="#1c1cb0" stroke="#0000c8"/>
              <path d="M376 1020 426 990 395 1065 376 1070z" fill="#1e1eff" stroke="#0000c8"/>
              <path d="M470 912 533 925 548 957Q430 1085 411 1235L407 1345 355 1220Q395 1080 430 990z" fill="#fabdd4" stroke="#f4a8c4"/><path d="M462 930Q405 1080 357 1205" stroke="#dca4b8" stroke-width="7" fill="none"/>
              <path d="M355 1220 407 1345Q370 1320 309 1318z" fill="#fff" stroke="#f4a8c4"/>
            </g>
            <g transform="translate(780 540) scale(.33333)">
              <path d="M693 1220V1195" stroke="#00c" stroke-width="5"/><path d="M685 1202 693 1178 701 1202z" fill="#0000a0"/><path d="m693 1220 30-20" stroke="#1a1" stroke-width="5"/><path d="m712 1198 26-10-16 18z" fill="#0a7a1c"/><path d="m693 1220 25 18" stroke="#e22" stroke-width="5"/><path d="m713 1242 22 9-10-19zM687 1214h12v12h-12z" fill="red"/>
              <g class="axis"><text x="695" y="1169">Z</text><text x="738" y="1180">Y</text><text x="738" y="1242">X</text></g>
            </g>
          </svg>
          </div>
        </div>
        <div class="stages">
          <button class="step" aria-label="First stage"><svg width="12" height="12" fill="#6f8094"><path d="M0 0h2v12H0zM11 0v12L3 6z"/></svg></button>
          <button class="step" aria-label="Previous stage"><svg width="12" height="12" fill="#6f8094"><path d="M10 0v12L2 6z"/></svg></button>
          <button class="step" aria-label="Next stage"><svg width="12" height="12" fill="#6f8094"><path d="M2 0v12l8-6z"/></svg></button>
          <button class="step" aria-label="Last stage"><svg width="12" height="12" fill="#6f8094"><path d="M10 0h2v12h-2zM1 0v12l8-6z"/></svg></button>
          <div class="select stage-select"><select aria-label="Stage"><option>Stage 1</option></select></div>
          <button class="stage-bar">Stage 1</button>
          <button class="add" aria-label="Add stage">+</button>
        </div>
      </div>
    </section>

    <aside class="panel legend">
      <div class="legend-head"><h2>Legend</h2><button aria-label="Legend options"><svg width="16" height="16"><path d="M1 0h4v10H1z" fill="#2e86d0" stroke="#245"/><path d="m5 9 7-7 3 3-7 7z" fill="#7cc84a" stroke="#3a6a28"/><path d="M1 11h4v4H1z" fill="#c01c1c"/><path d="M5 11h3v4H5z" fill="#e84040"/><path d="M8 11h4v4H8z" fill="#ff9c10"/><path d="M12 11h3v4h-3z" fill="#ffe010"/><path d="M.500 10.500h15v5H.500z" fill="none" stroke="#444"/></svg></button></div>
      <div class="select"><select aria-label="Contour result"><option>Factor of Safety</option></select></div>
      <dl class="mins"><dt>min (all) :</dt><dd>0.0000</dd><dt>min (stage) :</dt><dd>0.0000</dd></dl>
      <div class="ramp">
        <div class="bands"><i style="--h:0"></i><i style="--h:5"></i><i style="--h:10"></i><i style="--h:15"></i><i style="--h:20"></i><i style="--h:24"></i><i style="--h:29"></i><i style="--h:34"></i><i style="--h:39"></i><i style="--h:44"></i><i style="--h:49"></i><i style="--h:54"></i><i style="--h:59"></i><i style="--h:64"></i><i style="--h:69"></i><i style="--h:73"></i><i style="--h:78"></i><i style="--h:83"></i><i style="--h:88"></i><i style="--h:93"></i><i style="--h:98"></i><i style="--h:103"></i><i style="--h:108"></i><i style="--h:113"></i><i style="--h:118"></i><i style="--h:122"></i><i style="--h:127"></i><i style="--h:132"></i><i style="--h:137"></i><i style="--h:142"></i><i style="--h:147"></i><i style="--h:152"></i><i style="--h:157"></i><i style="--h:162"></i><i style="--h:167"></i><i style="--h:171"></i><i style="--h:176"></i><i style="--h:181"></i><i style="--h:186"></i><i style="--h:191"></i><i style="--h:196"></i><i style="--h:201"></i><i style="--h:206"></i><i style="--h:211"></i><i style="--h:216"></i><i style="--h:220"></i><i style="--h:225"></i><i style="--h:230"></i><i style="--h:235"></i><i style="--h:240"></i></div>
        <ol class="marks"><li>0.0000</li><li>0.5000</li><li>1.0000</li><li>1.5000</li><li>2.0000</li><li>2.5000</li><li>3.0000</li><li>3.5000</li><li>4.0000</li><li>4.5000</li><li>&gt; 5.0000</li></ol>
      </div>
      <dl class="maxs"><dt>max (stage) :</dt><dd>100.0000</dd><dt>max (all) :</dt><dd>100.0000</dd></dl>
    </aside>
  </main>

  <footer class="status">
    <span class="ready">Ready</span>
    <span class="cell">Computed Blocks: <b>52</b></span>
    <span class="cell">Kinematics: <b>Computed</b></span>
    <span class="tips">Data Tips:</span>
    <button class="tip chosen">Max</button><button class="tip">Min</button><button class="tip">None</button>
  </footer>
</div>
<div class="taskbar"><i class="badge"></i></div>
</body>
</html>
```
FILE: styles.css
```css
* { box-sizing: border-box; }

body {
  margin: 0;
  height: 100vh;
  display: flex;
  flex-direction: column;
  overflow: hidden;
  padding: 8px 8px 0;
  background: #000;
  color: #1e1e1e;
  font: 12px/16px "Open Sans", "Noto Sans", sans-serif;
}

button, input, select { font: inherit; color: inherit; margin: 0; }
button { border: 0; padding: 0; background: none; }
ul, ol, dl, dd, h1, h2 { margin: 0; padding: 0; list-style: none; font-weight: 400; }
svg { display: block; }
.defs { position: absolute; width: 0; height: 0; }
h2 { font-size: 16px; line-height: 22px; }

.app { flex: 1; min-height: 0; display: flex; flex-direction: column; background: #f8f8f8; }

/* title bar */
.titlebar { height: 32px; display: flex; align-items: center; padding: 1px 0 0 5px; color: #444; }
.titlebar h1 { font-size: 12px; line-height: 16px; margin-left: 5px; width: 230px; white-space: nowrap; }
.logo { width: 16px; height: 16px; flex: none; }
.titlebar .logo { background: #fff; }
.search { margin-left: auto; width: 250px; height: 28px; display: flex; align-items: center; gap: 6px; padding: 0 9px; background: #fff; border: 1px solid #aaa; }
.search input { flex: 1; min-width: 0; border: 0; padding: 0; background: none; outline: 0; }
.search input::placeholder { color: #777; opacity: 1; }
.window-buttons { display: flex; width: 140px; justify-content: space-around; padding-left: 2px; }
.window-buttons button { width: 46px; height: 30px; display: grid; place-items: center; }

/* menu */
.menu { height: 24px; display: flex; align-items: center; background: #e5e5e5; padding: 2px 0 0 7px; gap: 11px; color: #444; }
.menu .on { color: #000; }

/* toolbar */
.toolbar { height: 41px; display: flex; background: #e8ecf1; }
.group { display: flex; align-items: center; column-gap: 1px; padding: 0 1px; background: linear-gradient(#fefefe, #e8ecf2); border-right: 1px solid #c0c6cc; border-bottom: 1px solid #b9c0c7; }
.tool { width: 38px; height: 38px; display: grid; place-items: center; border: 1px solid transparent; border-radius: 2px; }
.tool svg { width: 28px; height: 28px; }
.drop { width: 11px; height: 38px; margin-left: -1px; display: grid; place-items: center; border: 1px solid transparent; border-radius: 2px; }
.drop::before, .caret::before { content: ""; width: 7px; height: 4px; background: #444; clip-path: polygon(0 0, 100% 0, 50% 100%); }
.caret::before, .dim::before { background: #999; }
.active { border-color: #bd9b3e; background: linear-gradient(#ffdf80, #ffd568 50%, #fff27e); }
.drop.active { background: linear-gradient(#fff0b8, #ffe488 50%, #fff6a0); }
.faded svg { opacity: .35; }

/* workspace */
.workspace { flex: 1; min-height: 0; display: grid; grid-template-columns: 278px 1fr 242px; column-gap: 4px; padding: 2px 2px; }
.sidebar { display: grid; grid-template-rows: 450fr 450fr; row-gap: 4px; min-height: 0; }
.panel { border: 1px solid #aaa; min-height: 0; display: flex; flex-direction: column; }
.visibility { padding: 0 2px 2px 1px; }
.visibility h2 { padding: 6px 7px 4px; }
.tabs { display: flex; height: 23px; border-bottom: 1px solid #b4b4b4; }
.tab { padding: 1px 10px 0; }
.tab.current { width: 46px; padding: 1px 0 0; border: 1px solid #aaa; border-bottom: 0; background: #f8f8f8; margin-bottom: -1px; }
.tree-head { height: 24px; display: flex; align-items: center; gap: 8px; padding: 0 3px 0 4px; color: #444; }
.tree-head span { flex: 1; }
.tree-box { flex: 1; display: flex; border: 1px solid #aaa; background: #fff; min-height: 0; }
.tree { flex: 1; min-width: 0; font-size: 11px; }
.tree li { display: flex; justify-content: flex-end; height: 28px; }
.twist { width: 20px; display: grid; place-items: center; }
.twist::before { content: ""; width: 5px; height: 8px; background: #444; clip-path: polygon(0 0, 100% 50%, 0 100%); }
.node { width: 234px; display: flex; align-items: center; padding: 0 5px 0 1px; border-left: 1px solid #ddd; border-bottom: 2px solid #ddd; color: #444; }
.node span { flex: 1; white-space: nowrap; padding-left: 1px; }
.node.selected { background: #ff9c7e; }
.chip { width: 6px; height: 16px; flex: none; }
.violet { background: #a590c4; }
.amber { background: #f8a840; }
.kind { width: 16px; height: 12px; flex: none; }
.kind.tall { height: 16px; }
.act { width: 23px; height: 24px; display: grid; place-items: center; flex: none; }
.act:last-child { width: 20px; }
.act.locked { margin-right: 3px; }
.i-eye { width: 14px; height: 12px; }
.i-lock { width: 14px; height: 16px; }
.i-trash { width: 10px; height: 14px; }

.scroll { width: 18px; background: #efefef; display: flex; flex-direction: column; justify-content: space-between; align-items: center; padding: 7px 0; }
.scroll .up, .scroll .down { width: 8px; height: 4px; background: #bbb; clip-path: polygon(50% 0, 100% 100%, 0 100%); }
.scroll .down { clip-path: polygon(0 0, 100% 0, 50% 100%); }
.thumb { width: 16px; flex: 1; margin: 7px 0 46px; background: #c0c0c0; }

/* properties */
.properties h2 { padding: 5px 8px 5px; }
.prop-body { flex: 1; min-height: 0; display: flex; justify-content: space-between; }
.form { width: 247px; padding: 11px 0 0 11px; }
.row { display: flex; align-items: center; }
.name { justify-content: space-between; height: 23px; }
.name input { width: 158px; height: 23px; border: 1px solid #bbb; background: #fff; padding: 0 4px; color: #555; }
.transparency { height: 24px; margin-top: 15px; justify-content: space-between; }
.transparency label { width: 80px; white-space: nowrap; }
.transparency input[type=range] { width: 96px; }
.spin { width: 56px; height: 22px; display: flex; border: 1px solid #aaa; background: #fff; }
.spin input { width: 40px; border: 0; padding: 0 0 0 7px; background: none; color: #555; }
.spin-btns { display: grid; width: 12px; align-content: center; gap: 6px; }
.inc, .dec { width: 8px; height: 4px; background: #444; clip-path: polygon(50% 0, 100% 100%, 0 100%); }
.dec { clip-path: polygon(0 0, 100% 0, 50% 100%); }

input[type=range] { appearance: none; height: 14px; margin: 0; background: linear-gradient(#ccd, #ccd) center / 100% 2px no-repeat; }
input[type=range]::-webkit-slider-thumb { appearance: none; width: 5px; height: 12px; background: #1a1a1a; border: 0; }

fieldset { min-width: 0; margin: 0; border: 1px solid #aaa; border-top-color: #ddd; }
legend { padding: 0 4px; line-height: 16px; }
.set { height: 61px; margin-top: 6px; padding: 8px 11px 0; }
.options { height: 179px; margin-top: 8px; padding: 14px 14px 0; }
.set legend { margin-left: -1px; }
.options legend { margin-left: -4px; }
.options .select { margin: 8px 0 3px; }

.select { position: relative; height: 26px; border: 1px solid #aaa; background: #fff; display: flex; align-items: center; }
.select select { appearance: none; width: 100%; height: 100%; border: 0; background: none; padding: 1px 20px 0 4px; outline: 0; }
.select::after { content: ""; position: absolute; right: 4px; top: 50%; width: 8px; height: 4px; margin-top: -2px; background: #444; clip-path: polygon(0 0, 100% 0, 50% 100%); pointer-events: none; }

.check { display: flex; align-items: center; gap: 4px; height: 28px; }
.check input { appearance: none; width: 14px; height: 14px; border: 1px solid #aaa; background: #fff; display: grid; place-items: center; }
.check input:checked::before { content: ""; width: 9px; height: 8px; background: #333; clip-path: polygon(0 50%, 15% 35%, 38% 65%, 88% 0, 100% 12%, 38% 100%); }
.bt { display: block; margin-top: 5px; }
.translation { align-items: flex-start; justify-content: space-between; margin-top: 7px; }
.scale { width: 177px; }
.scale input { display: block; width: 174px; margin-left: 3px; margin-top: 4px; }
.ticks { height: 3px; margin: 0 0 6px 5px; background: repeating-linear-gradient(90deg, #888 0 1px, transparent 1px 8px); }
.ends { display: flex; justify-content: space-between; line-height: 20px; }
.reset { width: 53px; height: 25px; margin-top: 1px; border: 1px solid #aaa; background: #fff; }

/* document */
.document { display: flex; flex-direction: column; min-width: 0; min-height: 0; }
.doc-tabs { display: flex; height: 24px; }
.doc-tab { width: 198px; display: flex; align-items: center; gap: 3px; padding: 0 6px 0 10px; border: 1px solid #aaa; border-bottom: 0; color: #444; }
.doc-tab span { flex: 1; white-space: nowrap; }
.doc-rest { flex: 1; display: flex; justify-content: flex-end; border-bottom: 1px solid #aaa; }
.caret { width: 16px; display: grid; place-items: center; }
.doc-body { flex: 1; min-height: 0; display: flex; flex-direction: column; border: 1px solid #aaa; border-top: 0; padding: 0 2px 2px; }
.workflow { display: flex; height: 39px; align-items: flex-start; }
.steps { display: flex; flex: 1; padding-top: 3px; }
.steps button { position: relative; height: 30px; margin-right: -5px; padding-top: 1px; background: #aaa; color: #888; clip-path: polygon(0 0, calc(100% - 9px) 0, 100% 50%, calc(100% - 9px) 100%, 0 100%, 9px 50%); }
.steps button::before { content: ""; position: absolute; inset: 1px; background: #e5e5e5; clip-path: polygon(1px 0, calc(100% - 9px) 0, 100% 50%, calc(100% - 9px) 100%, 1px 100%, 10px 50%); }
.steps .w1, .steps .w1::before { clip-path: polygon(0 0, calc(100% - 9px) 0, 100% 50%, calc(100% - 9px) 100%, 0 100%); }
.steps span { position: relative; }
.steps .w1 { width: 82px; padding-right: 9px; }
.w2 { width: 69px; }
.w3 { width: 140px; }
.w4 { width: 88px; }
.w5 { width: 78px; }
.steps .now { background: #666; color: #000; font-weight: 700; }
.steps .now::before { background: #fbd3a1; }
.split { width: 140px; height: 37px; padding-left: 6px; }
.split select { padding-left: 7px; }
.split svg { flex: none; }
.sync { margin: 11px 5px 0 8px; }
.views { flex: 1; min-height: 0; display: grid; grid-template-columns: 1fr 1fr; column-gap: 4px; }
.view { position: relative; border: 1px solid #888; background: #fff; min-height: 0; min-width: 0; overflow: hidden; }
.scene { width: 100%; height: 100%; }
.view-tools { position: absolute; left: 9px; top: 9px; display: grid; gap: 13px; }
.view-tools button, .view-tools svg { width: 24px; height: 24px; }
.view-tools svg { fill: none; stroke: #808080; }
.axis text { font: 16px "Liberation Sans", sans-serif; fill: #666; }
.compass text { font: 17px "Liberation Sans", sans-serif; fill: #6a6a6a; text-anchor: middle; }
.top { font: 10px "Liberation Sans", sans-serif; fill: #fff; text-anchor: middle; }
.stages { display: flex; height: 33px; margin-top: 4px; gap: 1px; }
.step, .add { width: 22px; background: #fdfdfd; border: 1px solid #bbb; display: grid; place-items: center; }
.stage-select { width: 106px; height: 32px; margin: 1px 2px 0 3px; }
.stage-bar { flex: 1; height: 31px; margin-top: 1px; padding-top: 3px; background: linear-gradient(#a590c4 5px, #000 5px 6px, #fbd3a1 6px); border: 1px solid #777; border-bottom-width: 2px; }
.add { width: 50px; height: 31px; margin: 1px 0 0 3px; }

/* legend */
.legend { padding: 7px 8px 0; }
.legend-head { display: flex; justify-content: space-between; height: 45px; }
.legend-head h2 { padding-top: 3px; }
.legend-head button { width: 40px; height: 25px; border: 1px solid #aaa; background: #fff; display: grid; place-items: center; }
.legend .select { height: 32px; }
dl { display: grid; grid-template-columns: 85px 1fr; line-height: 26px; }
dd { color: #555; }
.mins { margin-top: 7px; }
.ramp { flex: 1; display: flex; gap: 5px; margin: 22px 0 31px 17px; min-height: 0; }
.bands { width: 62px; display: flex; flex-direction: column; border: 1px solid #777; }
.bands i { flex: 1; background: hsl(var(--h) 100% 50%); }
.marks { display: flex; flex-direction: column; justify-content: space-between; margin: -9px 0 -5px; }
.maxs { padding: 0 0 19px 2px; grid-template-columns: 86px 1fr; }

/* status */
.status { height: 28px; display: flex; align-items: center; background: #efefef; padding: 1px 24px 0 3px; }
.ready { flex: 1; }
.cell { border-right: 1px solid #555; line-height: 24px; padding: 0 4px 0 5px; white-space: nowrap; }
.cell b { color: #000; margin-left: 1px; }
.tips { padding: 0 4px 0 5px; }
.tip { width: 53px; height: 20px; margin-left: 3px; }
.tip.chosen { background: #d2d2d2; margin-left: 0; }

.taskbar { height: 8px; flex: none; border-top: 1px solid #bbb; background: linear-gradient(90deg, #fadcd2, #fde6d2 20%, #fbe2d8 50%, #fde6cf 80%, #fde6d8); padding: 4px 0 0 32px; overflow: hidden; }
.badge { display: block; width: 12px; height: 12px; border-radius: 6px; background: #c22; }
```
